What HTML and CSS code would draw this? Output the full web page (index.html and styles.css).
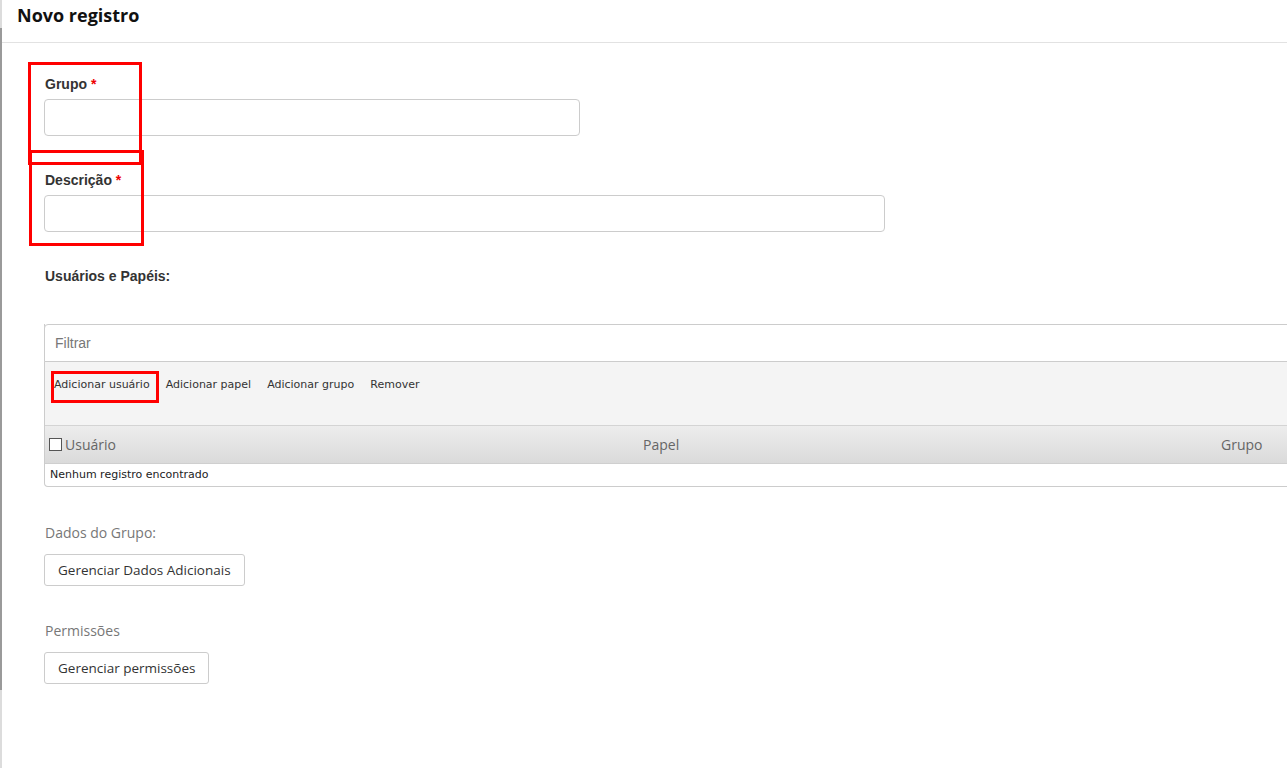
FILE: index.html
```html
<!DOCTYPE html>
<html lang="pt-BR">
<head>
  <meta charset="UTF-8" />
  <title>Novo registro</title>
  <link rel="stylesheet" href="styles.css">
</head>
<body>
  <div class="panel">
    <div class="panel-header">
      <h1>Novo registro</h1>
    </div>

    <div class="panel-body">
      <div class="field">
        <label>Grupo <span class="req">*</span></label>
        <input type="text" class="input short" />
      </div>

      <div class="field">
        <label>Descrição <span class="req">*</span></label>
        <input type="text" class="input medium" />
      </div>

      <div class="section-title">Usuários e Papéis:</div>

      <div class="grid">
        <input type="text" class="filter" placeholder="Filtrar" />
        <div class="toolbar">
          <span class="tool">Adicionar usuário</span>
          <span class="tool">Adicionar papel</span>
          <span class="tool">Adicionar grupo</span>
          <span class="tool">Remover</span>
        </div>
        <div class="grid-head">
          <div class="col col-user"><span class="check"></span>Usuário</div>
          <div class="col col-role">Papel</div>
          <div class="col col-group">Grupo</div>
        </div>
        <div class="grid-empty">Nenhum registro encontrado</div>
      </div>

      <div class="extra">
        <div class="extra-title">Dados do Grupo:</div>
        <button class="btn">Gerenciar Dados Adicionais</button>
      </div>

      <div class="extra">
        <div class="extra-title">Permissões</div>
        <button class="btn">Gerenciar permissões</button>
      </div>
    </div>

    <!-- marcações em vermelho -->
    <div class="mark mark-grupo"></div>
    <div class="mark mark-desc"></div>
    <div class="mark mark-add"></div>
  </div>
</body>
</html>
```

FILE: styles.css
```css
body {
  margin: 0;
  background: #fff;
  font-family: "Liberation Sans", Arial, sans-serif;
  color: #333;
  overflow: hidden;
}

.panel {
  position: relative;
  min-height: 768px;
  border-left: 2px solid #dcdcdc;
}

.panel::before {
  content: "";
  position: absolute;
  left: -2px;
  top: 28px;
  width: 2px;
  height: 662px;
  background: #9a9a9a;
}

.panel-header {
  height: 42px;
  border-bottom: 1px solid #e2e2e2;
  padding-left: 15px;
}

.panel-header h1 {
  margin: 0;
  font-family: "Open Sans", sans-serif;
  font-size: 18px;
  font-weight: bold;
  line-height: 30px;
  color: #111;
}

.panel-body {
  padding: 33px 0 0 42px;
}

.field {
  margin-bottom: 36px;
}

.field label {
  display: block;
  font-weight: bold;
  font-size: 14px;
  line-height: 16px;
  margin: 0 0 7px 1px;
  color: #333;
}

.req {
  color: #e00;
}

.input {
  display: block;
  box-sizing: border-box;
  height: 37px;
  border: 1px solid #ccc;
  border-radius: 4px;
  padding: 0 10px;
  font-size: 14px;
}

.input.short {
  width: 536px;
}

.input.medium {
  width: 841px;
}

.section-title {
  margin: 0 0 40px 1px;
  font-weight: bold;
  font-size: 14px;
  line-height: 16px;
  color: #333;
}

.grid {
  width: 1300px;
  border: 1px solid #ccc;
  border-top: none;
  border-radius: 0 0 4px 4px;
}

.filter {
  display: block;
  box-sizing: border-box;
  height: 38px;
  margin: 0 0 0 -1px;
  width: calc(100% + 2px);
  border: 1px solid #ccc;
  border-radius: 4px 4px 0 0;
  padding: 0 10px;
  font-family: "Liberation Sans", Arial, sans-serif;
  font-size: 14px;
}

.filter::placeholder {
  color: #777;
}

.toolbar {
  height: 64px;
  background: #f4f4f4;
  border-bottom: 1px solid #d4d4d4;
  padding: 14px 0 0 9px;
  box-sizing: border-box;
  display: flex;
  gap: 16px;
  font-family: "DejaVu Sans", Verdana, sans-serif;
  font-size: 11px;
  color: #333;
}

.tool {
  line-height: 17px;
  white-space: nowrap;
}

.grid-head {
  display: grid;
  grid-template-columns: 598px 578px 1fr;
  height: 37px;
  align-items: center;
  background: linear-gradient(#ededed, #dadada);
  border-bottom: 1px solid #cfcfcf;
  font-family: "Open Sans", sans-serif;
  font-size: 14px;
  color: #666;
}

.col-user {
  display: flex;
  align-items: center;
  padding-left: 4px;
}

.check {
  width: 11px;
  height: 11px;
  border: 1px solid #555;
  margin-right: 3px;
  background: #fff;
}

.grid-empty {
  height: 22px;
  line-height: 22px;
  padding-left: 5px;
  font-family: "DejaVu Sans", Verdana, sans-serif;
  font-size: 11px;
  color: #222;
}

.extra {
  margin-top: 36px;
}

.extra + .extra {
  margin-top: 35px;
}

.extra-title {
  font-family: "Open Sans", sans-serif;
  font-size: 14px;
  color: #777;
  line-height: 20px;
  margin: 0 0 11px 1px;
}

.btn {
  height: 32px;
  padding: 0 13px;
  background: #fff;
  border: 1px solid #ccc;
  border-radius: 3px;
  font-family: "Open Sans", sans-serif;
  font-size: 13.5px;
  color: #333;
}

.mark {
  position: absolute;
  border: 3px solid #f00;
  box-sizing: border-box;
}

.mark-grupo {
  left: 26px;
  top: 62px;
  width: 114px;
  height: 103px;
}

.mark-desc {
  left: 27px;
  top: 150px;
  width: 115px;
  height: 96px;
}

.mark-add {
  left: 49px;
  top: 371px;
  width: 108px;
  height: 32px;
}
```
